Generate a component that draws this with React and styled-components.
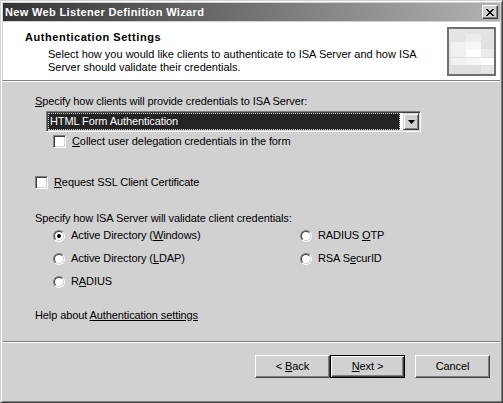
import React from 'react';
import styled, { createGlobalStyle } from 'styled-components';

const face = '#d1d1d1';

const GlobalStyle = createGlobalStyle`
  html, body { margin: 0; padding: 0; background: ${face}; }
  body {
    font-family: "Liberation Sans", Arial, sans-serif;
    font-size: 11px;
    letter-spacing: -0.1px;
    color: #000;
  }
`;

// outer dialog frame, classic raised 3D border
const Window = styled.div`
  box-sizing: border-box;
  width: 503px;
  height: 403px;
  background: ${face};
  border: 1px solid;
  border-color: ${face} #404040 #404040 ${face};
  box-shadow: inset 1px 1px #fff, inset -1px -1px #808080;
  padding: 2px;
  display: flex;
  flex-direction: column;
`;

const TitleBar = styled.div`
  height: 18px;
  margin-bottom: 1px;
  flex-shrink: 0;
  display: flex;
  align-items: center;
  justify-content: space-between;
  padding: 0 2px;
  background: linear-gradient(to right, #343434, #b2b2b2);
`;

const TitleText = styled.span`
  color: #fff;
  font-weight: bold;
  font-size: 11px;
  letter-spacing: 0.35px;
  line-height: 13px;
`;

const CloseButton = styled.div`
  box-sizing: border-box;
  width: 16px;
  height: 14px;
  background: ${face};
  border: 1px solid;
  border-color: #fff #404040 #404040 #fff;
  box-shadow: inset -1px -1px #808080;
  display: flex;
  align-items: center;
  justify-content: center;
`;

const Header = styled.div`
  height: 58px;
  flex-shrink: 0;
  background: #fff;
  display: flex;
  justify-content: space-between;
  align-items: flex-start;
  padding: 0 4px 0 22px;
`;

const HeaderText = styled.div`
  padding-top: 9px;
`;

const HeaderTitle = styled.div`
  font-weight: bold;
  letter-spacing: 0.55px;
  line-height: 13px;
`;

const HeaderDesc = styled.div`
  margin-top: 4px;
  padding-left: 23px;
  line-height: 13px;
  letter-spacing: 0;
`;

const HeaderIcon = styled.svg`
  margin-top: 5px;
  display: block;
`;

const Separator = styled.div`
  box-sizing: border-box;
  height: 2px;
  flex-shrink: 0;
  border-top: 1px solid #808080;
  border-bottom: 1px solid #fff;
`;

const Content = styled.div`
  flex: 1;
  display: flex;
  flex-direction: column;
  align-items: flex-start;
  padding: 13px 0 0 32px;
`;

const Label = styled.div`
  line-height: 13px;
  margin-top: ${p => p.$mt || 0}px;
  white-space: nowrap;
`;

const U = styled.span`
  text-decoration: underline;
  text-underline-offset: 1px;
`;

const Combo = styled.div`
  box-sizing: border-box;
  width: 375px;
  height: 21px;
  margin: 3px 0 0 11px;
  background: #fff;
  border: 1px solid;
  border-color: #808080 #fff #fff #808080;
  box-shadow: inset 1px 1px #404040, inset -1px -1px ${face};
  padding: 1px;
  display: flex;
`;

const ComboSelection = styled.div`
  box-sizing: border-box;
  flex: 1;
  height: 17px;
  margin-right: 3px;
  background: #242424;
  border: 1px dotted #cfcfcf;
  color: #fff;
  line-height: 15px;
  padding-left: 1px;
`;

const ComboButton = styled.div`
  box-sizing: border-box;
  width: 16px;
  height: 17px;
  background: ${face};
  border: 1px solid;
  border-color: ${face} #404040 #404040 ${face};
  box-shadow: inset 1px 1px #fff, inset -1px -1px #808080;
  display: flex;
  align-items: center;
  justify-content: center;
`;

const OptionRow = styled.div`
  display: flex;
  align-items: center;
  height: 13px;
  line-height: 13px;
  gap: ${p => p.$gap || 6}px;
  margin-top: ${p => p.$mt || 0}px;
  margin-left: ${p => p.$indent || 0}px;
  white-space: nowrap;
`;

const CheckBox = styled.span`
  box-sizing: border-box;
  width: 13px;
  height: 13px;
  flex-shrink: 0;
  background: #fff;
  border: 1px solid;
  border-color: #808080 #fff #fff #808080;
  box-shadow: inset 1px 1px #404040, inset -1px -1px ${face};
`;

const RadioOuter = styled.span`
  box-sizing: border-box;
  width: 12px;
  height: 12px;
  flex-shrink: 0;
  border-radius: 50%;
  border: 1px solid;
  border-color: #808080 #fff #fff #808080;
  display: flex;
`;

const RadioInner = styled.span`
  box-sizing: border-box;
  flex: 1;
  border-radius: 50%;
  border: 1px solid;
  border-color: #404040 ${face} ${face} #404040;
  background: #fff;
  display: flex;
  align-items: center;
  justify-content: center;
`;

const RadioDot = styled.span`
  width: 4px;
  height: 4px;
  border-radius: 50%;
  background: #000;
`;

const RadioGrid = styled.div`
  display: grid;
  grid-template-columns: 247px auto;
  row-gap: 10px;
  margin: 4px 0 0 18px;
`;

const Link = styled.span`
  text-decoration: underline;
  text-underline-offset: 1px;
`;

const Footer = styled.div`
  height: 45px;
  flex-shrink: 0;
  display: flex;
  justify-content: flex-end;
  align-items: flex-start;
  padding: 12px 10px 0 0;
`;

const Button = styled.div`
  box-sizing: border-box;
  width: 75px;
  height: 23px;
  margin-left: ${p => p.$gap || 0}px;
  background: ${face};
  border: 1px solid;
  border-color: ${p => (p.$default ? '#000' : '#fff #404040 #404040 #fff')};
  box-shadow: ${p =>
    p.$default
      ? 'inset 1px 1px #fff, inset -1px -1px #404040, inset -2px -2px #808080'
      : `inset -1px -1px #808080, inset 1px 1px ${face}`};
  display: flex;
  align-items: center;
  justify-content: center;
  line-height: 13px;
  white-space: pre;
`;

const Radio = ({ checked, children }) => (
  <OptionRow $gap={6}>
    <RadioOuter>
      <RadioInner>{checked && <RadioDot />}</RadioInner>
    </RadioOuter>
    <span>{children}</span>
  </OptionRow>
);

const cells = [
  [17, 5, 15, 8, '#ececec'],
  [2, 13, 15, 7, '#f1f1f1'],
  [17, 13, 15, 7, '#f7f7f7'],
  [2, 20, 15, 8, '#f0f0f0'],
  [17, 20, 15, 8, '#ffffff'],
  [32, 20, 13, 8, '#ebebeb'],
  [2, 29, 15, 7, '#f1f1f1'],
  [17, 29, 15, 7, '#f5f5f5'],
  [32, 29, 13, 7, '#ffffff'],
  [32, 37, 13, 7, '#e6e6e6'],
];

const WizardIcon = () => (
  <HeaderIcon width="49" height="49" viewBox="0 0 49 49">
    <defs>
      <linearGradient id="wg" x1="0" y1="0" x2="0.3" y2="1">
        <stop offset="0" stopColor="#e6e6e6" />
        <stop offset="1" stopColor="#dedede" />
      </linearGradient>
    </defs>
    <rect x="1" y="1" width="47" height="47" fill="url(#wg)" stroke="#707070" strokeWidth="2" />
    {cells.map(([x, y, w, h, c], i) => (
      <rect key={i} x={x + 2} y={y + 2} width={w} height={h} fill={c} />
    ))}
  </HeaderIcon>
);

export default function App() {
  return (
    <>
      <GlobalStyle />
      <Window>
        <TitleBar>
          <TitleText>New Web Listener Definition Wizard</TitleText>
          <CloseButton>
            <svg width="8" height="7" viewBox="0 0 8 7" shapeRendering="crispEdges">
              <path
                d="M0 0h2v1h1v1h2v-1h1v-1h2v1h-1v1h-1v1h-1v1h1v1h1v1h1v1h-2v-1h-1v-1h-2v1h-1v1h-2v-1h1v-1h1v-1h1v-1h-1v-1h-1v-1h-1z"
                fill="#000"
              />
            </svg>
          </CloseButton>
        </TitleBar>

        <Header>
          <HeaderText>
            <HeaderTitle>Authentication Settings</HeaderTitle>
            <HeaderDesc>
              Select how you would like clients to authenticate to ISA Server and how ISA
              <br />
              Server should validate their credentials.
            </HeaderDesc>
          </HeaderText>
          <WizardIcon />
        </Header>
        <Separator />

        <Content>
          <Label>
            <U>S</U>pecify how clients will provide credentials to ISA Server:
          </Label>
          <Combo>
            <ComboSelection>HTML Form Authentication</ComboSelection>
            <ComboButton>
              <svg width="7" height="4" viewBox="0 0 7 4">
                <path d="M0 0h7L3.5 4z" fill="#000" />
              </svg>
            </ComboButton>
          </Combo>
          <OptionRow $mt={3} $indent={18}>
            <CheckBox />
            <span>
              <U>C</U>ollect user delegation credentials in the form
            </span>
          </OptionRow>
          <OptionRow $mt={28}>
            <CheckBox />
            <span>
              <U>R</U>equest SSL Client Certificate
            </span>
          </OptionRow>

          <Label $mt={23}>Specify how ISA Server will validate client credentials:</Label>
          <RadioGrid>
            <Radio checked>
              Active Directory (<U>W</U>indows)
            </Radio>
            <Radio>
              RADIUS <U>O</U>TP
            </Radio>
            <Radio>
              Active Directory (<U>L</U>DAP)
            </Radio>
            <Radio>
              RSA S<U>e</U>curID
            </Radio>
            <Radio>
              R<U>A</U>DIUS
            </Radio>
          </RadioGrid>

          <Label $mt={21}>
            Help about <Link>Authentication settings</Link>
          </Label>
        </Content>

        <Separator />
        <Footer>
          <Button>
            <span>
              &lt; <U>B</U>ack
            </span>
          </Button>
          <Button $default>
            <span>
              <U>N</U>ext &gt;
            </span>
          </Button>
          <Button $gap={10}>Cancel</Button>
        </Footer>
      </Window>
    </>
  );
}
